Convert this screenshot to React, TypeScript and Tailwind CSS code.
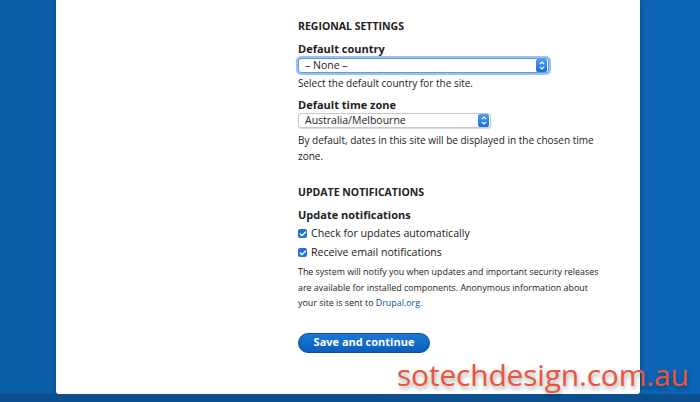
import { Check } from "lucide-react";

function SelectBox({ value, width, focused }: { value: string; width: string; focused?: boolean }) {
  return (
    <div
      className={`${width} h-[15px] flex items-center justify-between bg-white rounded-[3px] ${
        focused ? "border border-[#5a9de6] shadow-[0_0_0_2px_#9cc3f0]" : "border border-[#c9c9c9] shadow-[0_1px_1px_rgba(0,0,0,0.15)]"
      }`}
    >
      <span className="pl-[6px] text-[10.5px] leading-none text-[#222]">{value}</span>
      <span className="w-[11px] h-[13px] mr-[1px] rounded-[2px] bg-gradient-to-b from-[#4a9cf5] to-[#1a6fe0] flex flex-col items-center justify-center gap-[1px]">
        <svg width="6" height="4" viewBox="0 0 6 4"><path d="M0.8 3.2 L3 1 L5.2 3.2" stroke="white" strokeWidth="1.1" fill="none" /></svg>
        <svg width="6" height="4" viewBox="0 0 6 4"><path d="M0.8 0.8 L3 3 L5.2 0.8" stroke="white" strokeWidth="1.1" fill="none" /></svg>
      </span>
    </div>
  );
}

function CheckRow({ label }: { label: string }) {
  return (
    <div className="flex items-center gap-[4px] h-[19px]">
      <span className="w-[9px] h-[9px] rounded-[2px] bg-[#1f72dc] flex items-center justify-center">
        <Check className="w-[8px] h-[8px] text-white" strokeWidth={4} />
      </span>
      <span className="text-[10.6px] text-[#222]">{label}</span>
    </div>
  );
}

export default function App() {
  return (
    <div
      className="relative w-[700px] h-[402px] overflow-hidden bg-gradient-to-r from-[#0a5ea6] via-[#0b63b0] to-[#0b64b6] flex flex-col"
      style={{ fontFamily: '"Open Sans", "Liberation Sans", sans-serif' }}
    >
      <div className="flex flex-1">
        <div className="w-[56px]" />
        <div className="w-[584px] h-[394px] bg-white rounded-b-[3px] shadow-[0_1px_4px_rgba(0,0,0,0.35)] pl-[242px] pt-[19px] text-[#222]">
          <div className="text-[10.5px] font-bold h-[14px] leading-[14px]">REGIONAL SETTINGS</div>
          <div className="mt-[9px] text-[11px] font-bold h-[14px] leading-[14px]">Default country</div>
          <div className="mt-[2px]">
            <SelectBox value="– None –" width="w-[251px]" focused />
          </div>
          <div className="mt-[3px] text-[10px] h-[14px] leading-[14px]">Select the default country for the site.</div>
          <div className="mt-[8px] text-[11px] font-bold h-[14px] leading-[14px]">Default time zone</div>
          <div className="mt-[1px]">
            <SelectBox value="Australia/Melbourne" width="w-[193px]" />
          </div>
          <div className="mt-[4px] text-[10px] leading-[16px] w-[300px]">
            By default, dates in this site will be displayed in the chosen time zone.
          </div>
          <div className="mt-[21px] text-[10.5px] font-bold h-[14px] leading-[14px]">UPDATE NOTIFICATIONS</div>
          <div className="mt-[9px] text-[11px] font-bold h-[14px] leading-[14px]">Update notifications</div>
          <div className="mt-[2px]">
            <CheckRow label="Check for updates automatically" />
            <CheckRow label="Receive email notifications" />
          </div>
          <div className="mt-[2px] text-[8.9px] leading-[15.5px] w-[304px]">
            The system will notify you when updates and important security releases are available for installed components. Anonymous information about your site is sent to <span className="text-[#0a4f9e]">Drupal.org.</span>
          </div>
          <div className="mt-[22px] w-[132px] h-[20px] rounded-full bg-gradient-to-b from-[#1a78d6] to-[#0b5fbd] border border-[#0a4f9a] flex items-center justify-center">
            <span className="text-white text-[11px] font-bold">Save and continue</span>
          </div>
        </div>
      </div>
      <div className="h-[8px] bg-[#0b4f8e]" />
      <div
        className="absolute left-[397px] top-[355px] text-[30px] leading-[40px] tracking-[-0.2px] text-[#ea553d] [text-shadow:1px_3px_4px_rgba(0,0,0,0.35)]"
        style={{ fontFamily: '"Open Sans", sans-serif' }}
      >
        sotechdesign.com.au
      </div>
    </div>
  );
}
